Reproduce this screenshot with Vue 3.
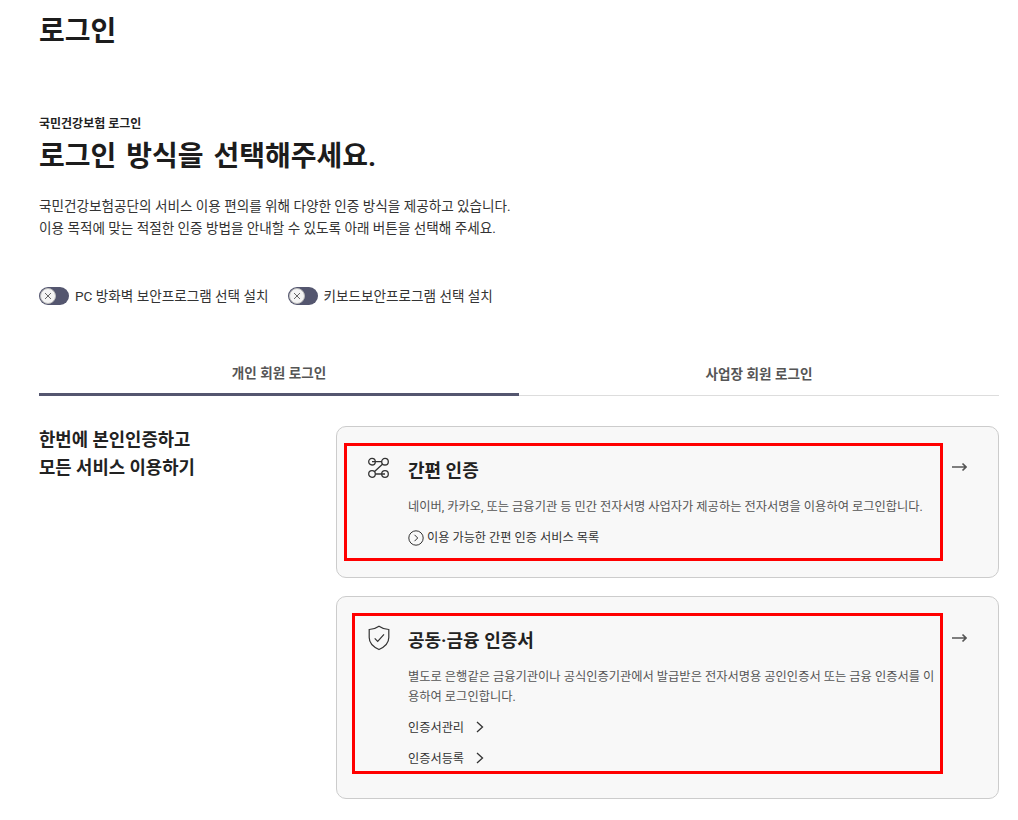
<template>
  <div class="page">
    <h1 class="page-title">로그인</h1>

    <p class="eyebrow">국민건강보험 로그인</p>
    <h2 class="headline">로그인 방식을 선택해주세요.</h2>
    <p class="intro">
      국민건강보험공단의 서비스 이용 편의를 위해 다양한 인증 방식을 제공하고 있습니다.<br />
      이용 목적에 맞는 적절한 인증 방법을 안내할 수 있도록 아래 버튼을 선택해 주세요.
    </p>

    <div class="toggles">
      <label v-for="item in toggles" :key="item" class="toggle">
        <span class="switch">
          <span class="knob">
            <svg width="8" height="8" viewBox="0 0 8 8" fill="none" stroke="#666" stroke-width="1">
              <path d="M1 1l6 6M7 1l-6 6" />
            </svg>
          </span>
        </span>
        {{ item }}
      </label>
    </div>

    <div class="tabs">
      <button class="tab active">개인 회원 로그인</button>
      <button class="tab">사업장 회원 로그인</button>
    </div>

    <div class="content">
      <h3 class="lead">한번에 본인인증하고<br />모든 서비스 이용하기</h3>

      <div class="cards">
        <section class="card card-simple">
          <div class="card-head">
            <svg class="card-icon" width="22" height="22" viewBox="0 0 22 22" fill="none" stroke="#333" stroke-width="1.3">
              <circle cx="5" cy="4.700" r="3.300" />
              <circle cx="18" cy="4.700" r="3.300" />
              <circle cx="5" cy="17" r="3.300" />
              <circle cx="18" cy="17" r="3.300" />
              <path d="M5 4.700h9.700M8.300 17H18M15.700 7L7.300 14.700" />
            </svg>
            <h4 class="card-title">간편 인증</h4>
          </div>
          <p class="card-desc">네이버, 카카오, 또는 금융기관 등 민간 전자서명 사업자가 제공하는 전자서명을 이용하여 로그인합니다.</p>
          <a class="list-link">
            <svg width="16" height="16" viewBox="0 0 16 16" fill="none" stroke="#333" stroke-width="1">
              <circle cx="8" cy="8" r="7.200" />
              <path d="M6.500 4.800L9.700 8l-3.200 3.200" />
            </svg>
            이용 가능한 간편 인증 서비스 목록
          </a>
          <svg class="arrow" width="15" height="10" viewBox="0 0 15 10" fill="none" stroke="#555" stroke-width="1.600">
            <path d="M0 5h14M10.500 1.500L14 5l-3.500 3.500" />
          </svg>
          <div class="mark mark-simple"></div>
        </section>

        <section class="card card-cert">
          <div class="card-head">
            <svg class="card-icon shield" width="22" height="26" viewBox="0 0 22 26" fill="none" stroke="#333" stroke-width="1.200">
              <path d="M11 1.200C13.500 3 17 4.300 20.800 4.500v8c0 5.500-4.300 9.500-9.800 12-5.500-2.500-9.800-6.500-9.800-12v-8C5 4.300 8.500 3 11 1.200z" />
              <path d="M6.700 13.300l3 3L16 9.300" />
            </svg>
            <h4 class="card-title">공동·금융 인증서</h4>
          </div>
          <p class="card-desc">별도로 은행같은 금융기관이나 공식인증기관에서 발급받은 전자서명용 공인인증서 또는 금융 인증서를 이용하여 로그인합니다.</p>
          <a v-for="link in certLinks" :key="link" class="cert-link">
            {{ link }}
            <svg width="8" height="12" viewBox="0 0 8 12" fill="none" stroke="#333" stroke-width="1.300">
              <path d="M1 1l5.500 5L1 11" />
            </svg>
          </a>
          <svg class="arrow" width="15" height="10" viewBox="0 0 15 10" fill="none" stroke="#555" stroke-width="1.600">
            <path d="M0 5h14M10.500 1.500L14 5l-3.500 3.500" />
          </svg>
          <div class="mark mark-cert"></div>
        </section>
      </div>
    </div>
  </div>
</template>

<script setup>
const toggles = ['PC 방화벽 보안프로그램 선택 설치', '키보드보안프로그램 선택 설치']
const certLinks = ['인증서관리', '인증서등록']
</script>

<style>
html, body {
  background: #fff;
  overflow: hidden;
}
</style>

<style scoped>
.page {
  width: 999px;
  height: 820px;
  box-sizing: border-box;
  padding: 12px 0 0 39px;
  overflow: hidden;
  font-family: Roboto, "Noto Sans CJK KR", sans-serif;
  color: #222;
}

.page-title {
  margin: 0;
  font-size: 28px;
  line-height: 40px;
  font-weight: 700;
  color: #1c1c1c;
}

.eyebrow {
  margin: 63px 0 0;
  font-size: 12px;
  line-height: 18px;
  font-weight: 700;
}

.headline {
  margin: 5px 0 0;
  font-size: 28px;
  line-height: 38px;
  font-weight: 700;
  word-spacing: 3px;
  color: #1c1c1c;
}

.intro {
  margin: 19px 0 0;
  font-size: 13.6px;
  line-height: 22px;
  color: #333;
}

.toggles {
  display: flex;
  gap: 19px;
  margin-top: 47px;
}

.toggle {
  display: flex;
  align-items: center;
  gap: 6px;
  font-size: 13.6px;
  line-height: 20px;
  color: #333;
}

.switch {
  display: flex;
  align-items: center;
  width: 30px;
  height: 18px;
  border-radius: 9px;
  background: #54566f;
}

.knob {
  display: flex;
  align-items: center;
  justify-content: center;
  box-sizing: border-box;
  width: 16px;
  height: 16px;
  margin-left: 1px;
  border: 1px solid #bbb;
  border-radius: 50%;
  background: #f4f4f4;
}

.tabs {
  display: flex;
  margin-top: 50px;
  border-bottom: 1px solid #ddd;
}

.tab {
  flex: 1;
  height: 39px;
  padding: 0 0 4px;
  border: 0;
  background: none;
  font: 700 13.6px/20px Roboto, "Noto Sans CJK KR", sans-serif;
  color: #555;
}

.tab.active {
  margin-bottom: -1px;
  height: 40px;
  border-bottom: 3px solid #54566f;
}

.content {
  display: flex;
  margin-top: 30px;
}

.lead {
  width: 297px;
  margin: 0;
  font-size: 17.76px;
  line-height: 28px;
  font-weight: 700;
  color: #222;
}

.cards {
  display: flex;
  flex-direction: column;
  gap: 18px;
  width: 663px;
}

.card {
  position: relative;
  box-sizing: border-box;
  padding: 29px 60px 0 71px;
  border: 1px solid #ccc;
  border-radius: 10px;
  background: #f8f8f8;
}

.card-simple {
  height: 152px;
}

.card-cert {
  height: 203px;
}

.card-cert .card-desc {
  margin-bottom: -1px;
}

.card-head {
  display: flex;
  align-items: center;
  height: 30px;
}

.card-icon {
  position: absolute;
  left: 30px;
  top: 30px;
}

.card-icon.shield {
  left: 31px;
  top: 28px;
}

.card-title {
  margin: 0;
  font-size: 18px;
  line-height: 30px;
  font-weight: 700;
  color: #222;
}

.card-desc {
  margin: 11px 0 0;
  font-size: 12.25px;
  line-height: 20px;
  word-break: break-all;
  color: #555;
}

.list-link {
  display: flex;
  align-items: center;
  gap: 3px;
  margin: 11px 0 0;
  font-size: 12.2px;
  line-height: 20px;
  color: #333;
}

.cert-link {
  display: flex;
  align-items: center;
  gap: 12px;
  margin-top: 11px;
  height: 20px;
  font-size: 12.2px;
  color: #333;
}

.arrow {
  position: absolute;
  right: 31px;
  top: 35px;
}

.card-cert .arrow {
  top: 36px;
}

.mark {
  position: absolute;
  box-sizing: border-box;
  border: 3px solid #f00;
  pointer-events: none;
}

.mark-simple {
  left: 7px;
  top: 16px;
  width: 599px;
  height: 118px;
}

.mark-cert {
  left: 15px;
  top: 16px;
  width: 591px;
  height: 161px;
}
</style>
